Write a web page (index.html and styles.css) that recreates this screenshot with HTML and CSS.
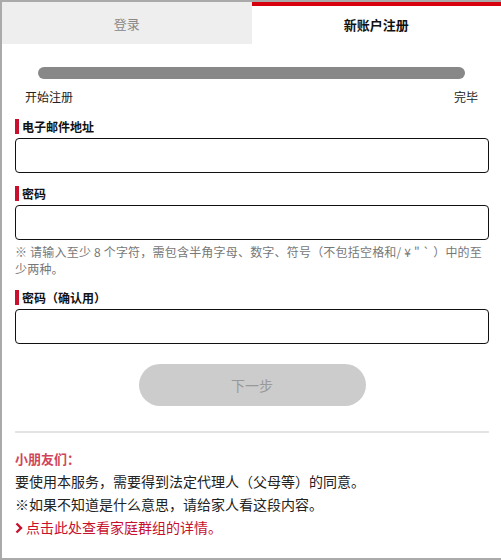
FILE: index.html
```html
<!DOCTYPE html>
<html lang="zh-CN">
<head>
    <meta charset="UTF-8">
    <meta name="viewport" content="width=device-width, initial-scale=1.0">
    <title>新账户注册</title>
    <link rel="stylesheet" href="styles.css">
</head>
<body>
    <div class="frame">
        <!-- Tabs -->
        <div class="tabs">
            <div class="tab">登录</div>
            <div class="tab active">新账户注册</div>
        </div>

        <div class="content">
            <!-- Progress -->
            <div class="progress">
                <div class="progress-bar"></div>
                <div class="progress-labels">
                    <span>开始注册</span>
                    <span>完毕</span>
                </div>
            </div>

            <!-- Form -->
            <div class="field first">
                <label class="field-label">电子邮件地址</label>
                <input class="field-input" type="email">
            </div>

            <div class="field">
                <label class="field-label">密码</label>
                <input class="field-input" type="password">
                <p class="note">※ 请输入至少 8 个字符，需包含半角字母、数字、符号（不包括空格和/ ¥ " ` ）中的至少两种。</p>
            </div>

            <div class="field">
                <label class="field-label">密码（确认用）</label>
                <input class="field-input" type="password">
            </div>

            <div class="actions">
                <button class="next-btn" disabled>下一步</button>
            </div>

            <hr class="divider">

            <!-- Kids notice -->
            <div class="kids">
                <p class="kids-title">小朋友们：</p>
                <p>要使用本服务，需要得到法定代理人（父母等）的同意。</p>
                <p>※如果不知道是什么意思，请给家人看这段内容。</p>
                <a class="kids-link" href="#">
                    <svg width="8" height="12" viewBox="0 0 8 12"><polyline points="1.5,1.5 6,6 1.5,10.5" fill="none" stroke="#c8102e" stroke-width="2.4"/></svg>
                    点击此处查看家庭群组的详情。
                </a>
            </div>
        </div>
    </div>
</body>
</html>
```

FILE: styles.css
```css
* {
    box-sizing: border-box;
}

body {
    margin: 0;
    font-family: "Noto Sans CJK SC", "Noto Sans", sans-serif;
    color: #222;
    background: #fff;
}

.frame {
    width: 501px;
    height: 560px;
    border-left: 2px solid #aaa;
    border-top: 2px solid #aaa;
    border-bottom: 2px solid #aaa;
    overflow: hidden;
}

/* Tabs */
.tabs {
    display: flex;
}

.tab {
    flex: 1;
    height: 42px;
    display: flex;
    align-items: center;
    justify-content: center;
    background: #eee;
    color: #888;
    font-size: 13px;
}

.tab.active {
    background: #fff;
    color: #111;
    font-weight: bold;
    border-top: 4px solid #d7000f;
    padding-bottom: 2px;
}

.content {
    padding: 0 12px 0 13px;
}

/* Progress */
.progress {
    padding-top: 23px;
}

.progress-bar {
    height: 12px;
    margin: 0 24px 0 23px;
    background: #888;
    border-radius: 6px;
}

.progress-labels {
    display: flex;
    justify-content: space-between;
    margin-top: 10px;
    padding: 0 11px 0 10px;
    font-size: 12px;
    line-height: 16px;
    color: #222;
}

/* Fields */
.field {
    margin-top: 13px;
}

.field.first {
    margin-top: 14px;
}

.field-label {
    display: block;
    border-left: 4px solid #c8102e;
    padding-left: 3px;
    font-size: 12px;
    font-weight: bold;
    line-height: 15px;
    color: #111;
    margin-bottom: 4px;
}

.field-input {
    display: block;
    width: 100%;
    height: 35px;
    border: 1px solid #111;
    border-radius: 4px;
    background: #fff;
    font: inherit;
}

.note {
    margin: 3px 0 1px;
    font-size: 12px;
    line-height: 17px;
    letter-spacing: 0.2px;
    color: #777;
}

/* Button */
.actions {
    display: flex;
    justify-content: center;
    margin-top: 20px;
}

.next-btn {
    width: 227px;
    height: 42px;
    border: none;
    border-radius: 21px;
    background: #ccc;
    color: #999;
    font-family: inherit;
    font-size: 14px;
}

.divider {
    margin: 25px 0 0;
    border: none;
    border-top: 2px solid #e4e4e4;
}

/* Kids notice */
.kids {
    margin-top: 14px;
    font-size: 14px;
    line-height: 23px;
    color: #222;
}

.kids p {
    margin: 0;
}

.kids .kids-title {
    font-size: 13px;
    font-weight: bold;
    color: #d0455a;
}

.kids-link {
    display: flex;
    align-items: center;
    gap: 3px;
    color: #c8102e;
    text-decoration: none;
}
```
